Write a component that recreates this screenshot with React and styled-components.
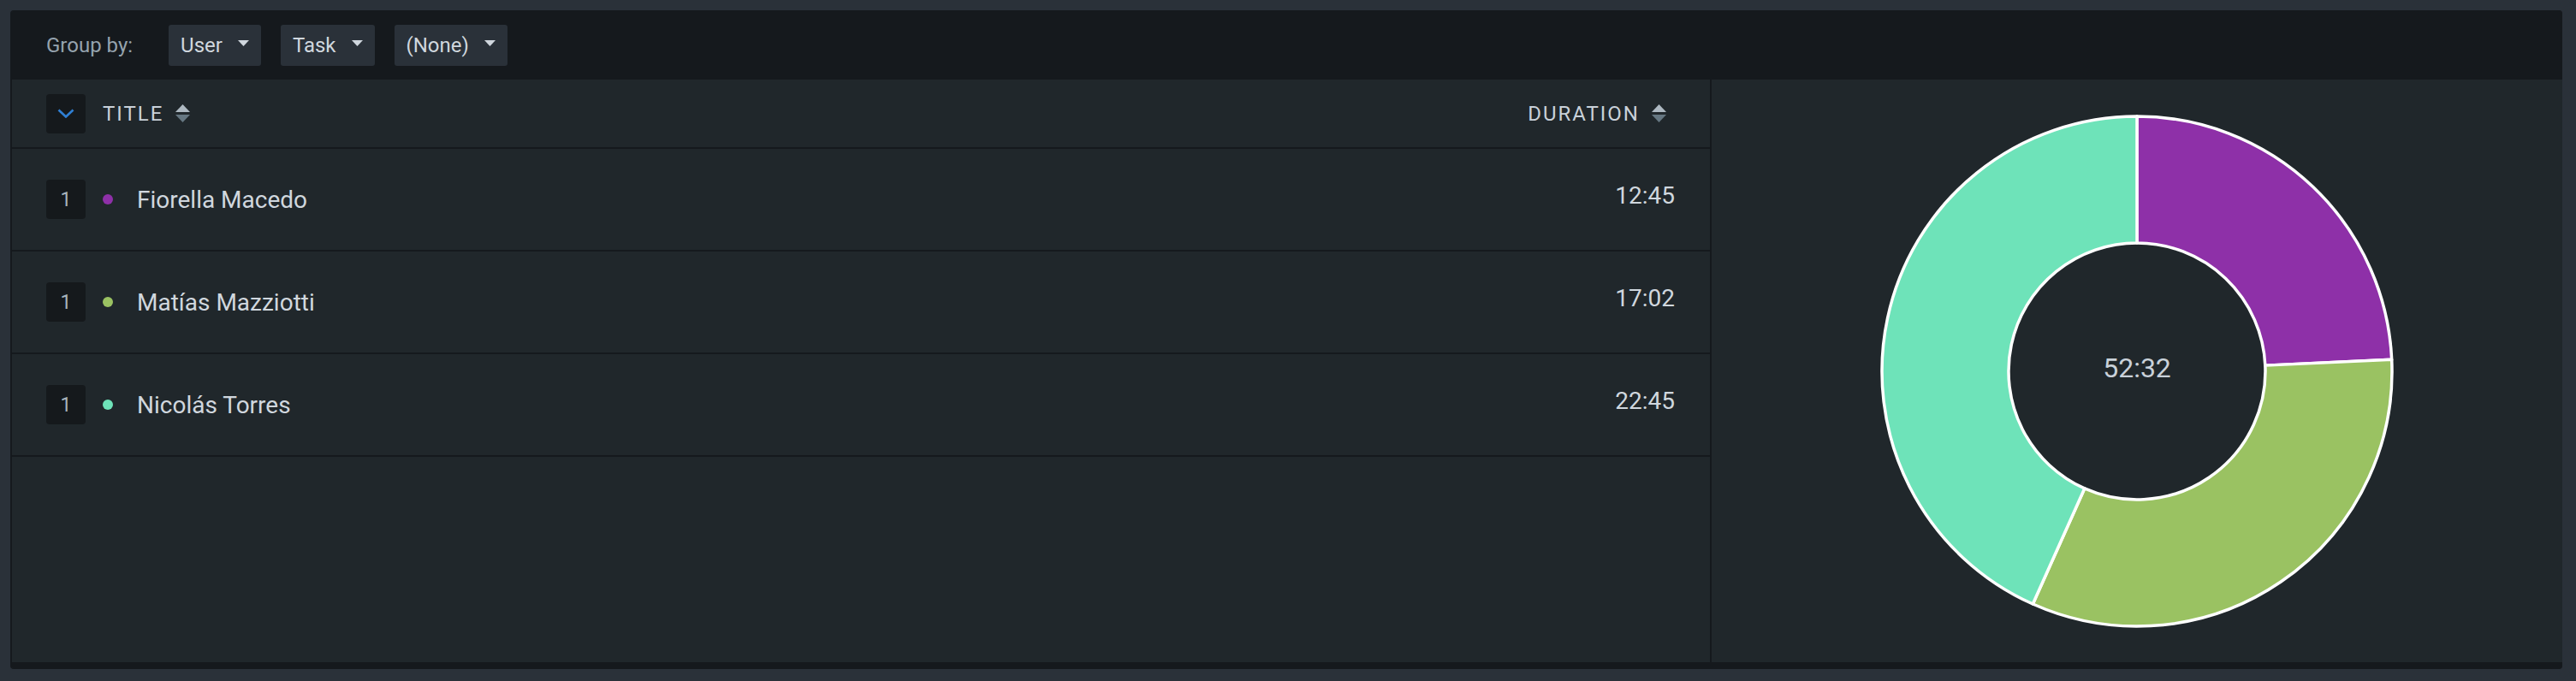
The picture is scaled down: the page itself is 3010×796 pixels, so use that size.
import React from "react";
import styled, { createGlobalStyle } from "styled-components";

const entries = [
  { id: 1, name: "Fiorella Macedo", color: "#8e30a8", duration: "12:45" },
  { id: 2, name: "Matías Mazziotti", color: "#9ac262", duration: "17:02" },
  { id: 3, name: "Nicolás Torres", color: "#6ee3b9", duration: "22:45" },
];

const toSeconds = (t) => {
  const [m, s] = t.split(":").map(Number);
  return m * 60 + s;
};

const formatTime = (sec) =>
  `${Math.floor(sec / 60)}:${String(sec % 60).padStart(2, "0")}`;

const GlobalStyle = createGlobalStyle`
  html, body {
    margin: 0;
    padding: 0;
    background: #2a3139;
    font-family: Roboto, "Liberation Sans", sans-serif;
  }
  * { box-sizing: border-box; }
`;

export default function App() {
  const total = entries.reduce((sum, e) => sum + toSeconds(e.duration), 0);

  return (
    <>
      <GlobalStyle />
      <Page>
        <Panel>
          <Toolbar>
            <GroupLabel>Group by:</GroupLabel>
            <Dropdown>
              User <Caret />
            </Dropdown>
            <Dropdown>
              Task <Caret />
            </Dropdown>
            <Dropdown>
              (None) <Caret />
            </Dropdown>
          </Toolbar>
          <Content>
            <TableCol>
              <HeaderRow>
                <ExpandBox>
                  <svg width="20" height="11" viewBox="0 0 20 11">
                    <path
                      d="M1.5 1.5 L10 9.5 L18.5 1.5"
                      fill="none"
                      stroke="#2f7fd3"
                      strokeWidth="2.6"
                    />
                  </svg>
                </ExpandBox>
                <HeaderLabel>Title</HeaderLabel>
                <SortIcon />
                <Spacer />
                <HeaderLabel>Duration</HeaderLabel>
                <SortIcon />
              </HeaderRow>
              {entries.map((e) => (
                <Row key={e.id}>
                  <CountBadge>1</CountBadge>
                  <Dot color={e.color} />
                  <Name>{e.name}</Name>
                  <Spacer />
                  <Value>{e.duration}</Value>
                </Row>
              ))}
            </TableCol>
            <ChartCol>
              <Donut entries={entries} total={total} />
            </ChartCol>
          </Content>
          <Footer />
        </Panel>
      </Page>
    </>
  );
}

const Caret = () => (
  <CaretSvg width="13" height="7" viewBox="0 0 13 7">
    <path d="M0 0 L13 0 L6.5 7 Z" fill="#d0d7de" />
  </CaretSvg>
);

const SortIcon = () => (
  <SortSvg width="17" height="21" viewBox="0 0 17 21">
    <path d="M8.5 0 L17 9 L0 9 Z" fill="#aeb9c2" />
    <path d="M0 12 L17 12 L8.5 21 Z" fill="#667782" />
  </SortSvg>
);

const Donut = ({ entries, total }) => {
  const cx = 300;
  const cy = 300;
  const R = 298;
  const r = 150;
  const pt = (rad, a) => [cx + rad * Math.sin(a), cy - rad * Math.cos(a)];
  let start = 0;

  return (
    <ChartBox>
      <svg width="604" height="604" viewBox="-2 -2 604 604">
        {entries.map((e) => {
          const sweep = (toSeconds(e.duration) / total) * Math.PI * 2;
          const a0 = start;
          const a1 = start + sweep;
          start = a1;
          const large = sweep > Math.PI ? 1 : 0;
          const [x0, y0] = pt(R, a0);
          const [x1, y1] = pt(R, a1);
          const [x2, y2] = pt(r, a1);
          const [x3, y3] = pt(r, a0);
          const d = `M${x0} ${y0} A${R} ${R} 0 ${large} 1 ${x1} ${y1} L${x2} ${y2} A${r} ${r} 0 ${large} 0 ${x3} ${y3} Z`;
          return (
            <path
              key={e.id}
              d={d}
              fill={e.color}
              stroke="#ffffff"
              strokeWidth="3.5"
              strokeLinejoin="round"
            />
          );
        })}
      </svg>
      <Total>{formatTime(total)}</Total>
    </ChartBox>
  );
};

const Page = styled.div`
  height: 796px;
  padding: 12px 16px 14px 12px;
`;

const Panel = styled.div`
  height: 100%;
  display: flex;
  flex-direction: column;
  background: #20272b;
  border-radius: 4px;
  overflow: hidden;
  border-left: 2px solid #15191d;
`;

const Toolbar = styled.div`
  height: 81px;
  flex: 0 0 81px;
  display: flex;
  align-items: center;
  padding-left: 40px;
  gap: 23px;
  background: #15191d;
`;

const GroupLabel = styled.span`
  font-size: 24px;
  color: #95a3ae;
  margin-right: 19px;
`;

const Dropdown = styled.button`
  height: 48px;
  display: flex;
  align-items: center;
  gap: 18px;
  padding: 0 14px;
  border: none;
  border-radius: 3px;
  background: #2a3139;
  color: #d0d7de;
  font-family: inherit;
  font-size: 24px;
`;

const CaretSvg = styled.svg`
  display: block;
  margin-top: -4px;
`;

const Content = styled.div`
  flex: 1;
  display: flex;
  min-height: 0;
`;

const TableCol = styled.div`
  flex: 0 0 1986px;
  border-right: 2px solid #15191d;
`;

const HeaderRow = styled.div`
  height: 81px;
  display: flex;
  align-items: center;
  padding: 0 51px 0 40px;
  border-bottom: 2px solid #15191d;
`;

const ExpandBox = styled.div`
  width: 46px;
  height: 46px;
  margin-right: 20px;
  border-radius: 4px;
  background: #15191c;
  display: flex;
  align-items: center;
  justify-content: center;
`;

const HeaderLabel = styled.span`
  font-size: 24px;
  letter-spacing: 2px;
  text-transform: uppercase;
  color: #c9d1d9;
`;

const SortSvg = styled.svg`
  display: block;
  margin-left: 14px;
`;

const Spacer = styled.div`
  flex: 1;
`;

const Row = styled.div`
  height: 120px;
  display: flex;
  align-items: center;
  padding: 0 41px 0 40px;
  border-bottom: 2px solid #15191d;
`;

const CountBadge = styled.div`
  width: 46px;
  height: 46px;
  margin-right: 20px;
  border-radius: 4px;
  background: #15191c;
  color: #a9b4bd;
  font-size: 23px;
  display: flex;
  align-items: center;
  justify-content: center;
`;

const Dot = styled.span`
  width: 12px;
  height: 12px;
  border-radius: 50%;
  margin-right: 28px;
  background: ${(props) => props.color};
`;

const Name = styled.span`
  font-size: 28px;
  color: #d0d7de;
`;

const Value = styled.span`
  font-size: 28px;
  color: #d0d7de;
  margin-bottom: 10px;
`;

const ChartCol = styled.div`
  flex: 1;
  display: flex;
  align-items: center;
  justify-content: center;
`;

const ChartBox = styled.div`
  position: relative;
  width: 604px;
  height: 604px;
  svg {
    display: block;
  }
`;

const Total = styled.div`
  position: absolute;
  left: 0;
  right: 0;
  top: 50%;
  transform: translateY(-50%);
  margin-top: -4px;
  text-align: center;
  font-size: 32px;
  color: #c9d1d9;
`;

const Footer = styled.div`
  flex: 0 0 8px;
  background: #15191d;
`;
